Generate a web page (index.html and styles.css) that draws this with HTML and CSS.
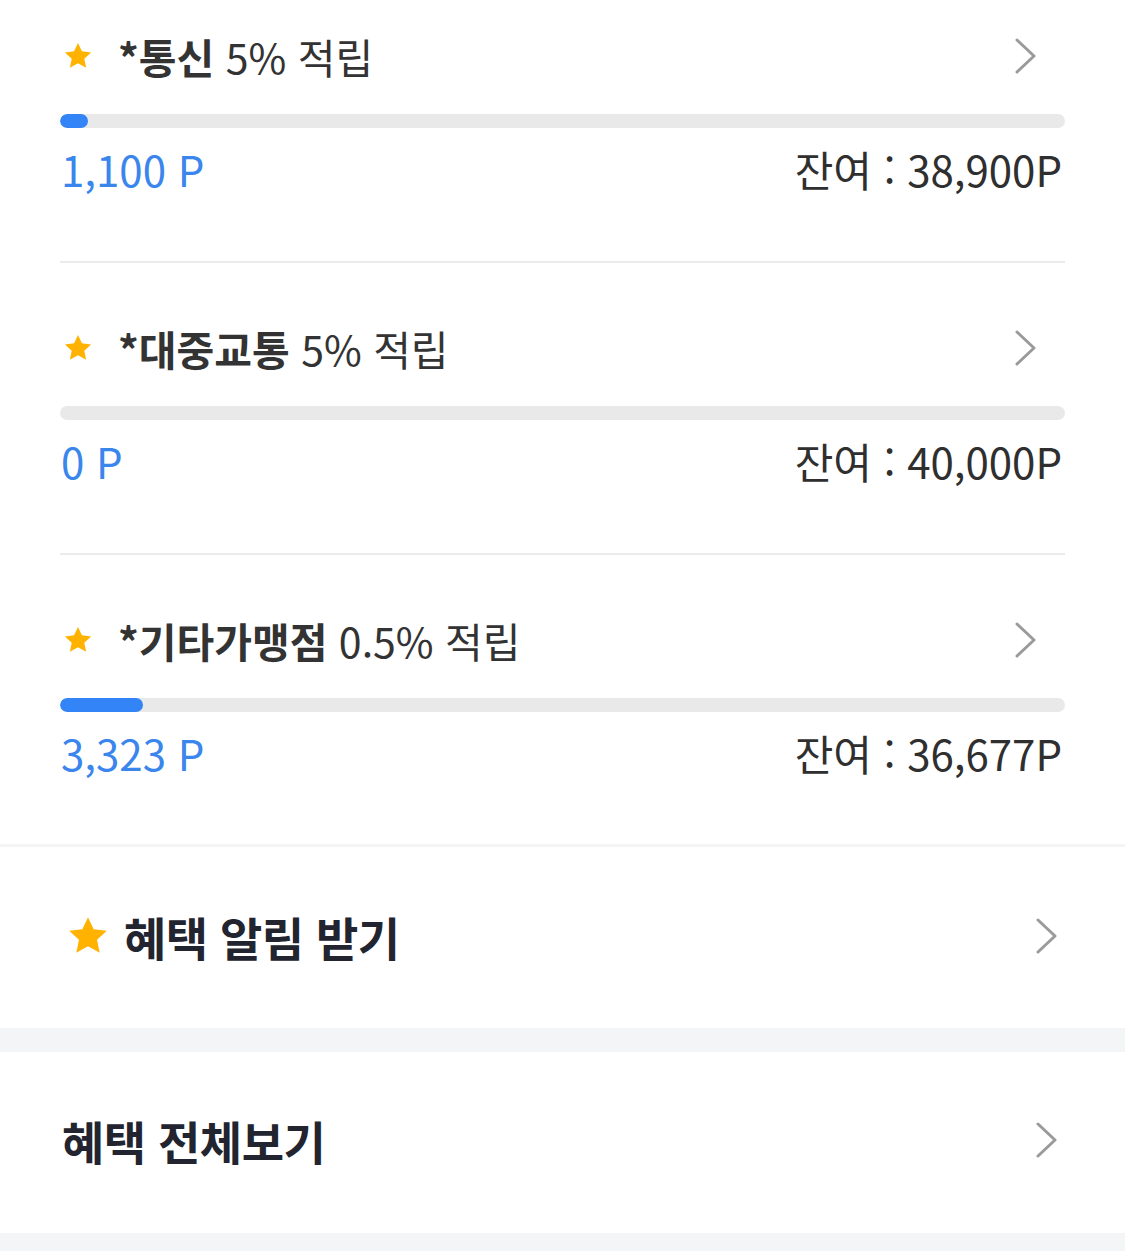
FILE: index.html
```html
<!DOCTYPE html>
<html lang="ko">
<head>
<meta charset="utf-8">
<link rel="stylesheet" href="styles.css">
</head>
<body>
<div class="page">
  <section class="list">
    <div class="item first">
      <div class="title-row">
        <svg class="star" viewBox="0 0 24 24"><path d="M12 2.2l2.95 6.3 6.85.8-5.08 4.68 1.37 6.77L12 17.35l-6.09 3.4 1.37-6.77L2.2 9.3l6.85-.8z"/></svg>
        <span class="title"><b>*통신</b> 5% 적립</span>
        <svg class="chev" viewBox="0 0 22 36"><path d="M2 2l17 16L2 34"/></svg>
      </div>
      <div class="bar"><div class="fill" style="width:28px"></div></div>
      <div class="points-row">
        <span class="points">1,100 P</span>
        <span class="remain">잔여 : 38,900P</span>
      </div>
    </div>
    <div class="item">
      <div class="title-row">
        <svg class="star" viewBox="0 0 24 24"><path d="M12 2.2l2.95 6.3 6.85.8-5.08 4.68 1.37 6.77L12 17.35l-6.09 3.4 1.37-6.77L2.2 9.3l6.85-.8z"/></svg>
        <span class="title"><b>*대중교통</b> 5% 적립</span>
        <svg class="chev" viewBox="0 0 22 36"><path d="M2 2l17 16L2 34"/></svg>
      </div>
      <div class="bar"></div>
      <div class="points-row">
        <span class="points">0 P</span>
        <span class="remain">잔여 : 40,000P</span>
      </div>
    </div>
    <div class="item last">
      <div class="title-row">
        <svg class="star" viewBox="0 0 24 24"><path d="M12 2.2l2.95 6.3 6.85.8-5.08 4.68 1.37 6.77L12 17.35l-6.09 3.4 1.37-6.77L2.2 9.3l6.85-.8z"/></svg>
        <span class="title"><b>*기타가맹점</b> 0.5% 적립</span>
        <svg class="chev" viewBox="0 0 22 36"><path d="M2 2l17 16L2 34"/></svg>
      </div>
      <div class="bar"><div class="fill" style="width:83px"></div></div>
      <div class="points-row">
        <span class="points">3,323 P</span>
        <span class="remain">잔여 : 36,677P</span>
      </div>
    </div>
  </section>
  <div class="menu-row alarm">
    <svg class="star big" viewBox="0 0 24 24"><path d="M12 2.2l2.95 6.3 6.85.8-5.08 4.68 1.37 6.77L12 17.35l-6.09 3.4 1.37-6.77L2.2 9.3l6.85-.8z"/></svg>
    <span class="menu-title">혜택 알림 받기</span>
    <svg class="chev" viewBox="0 0 22 36"><path d="M2 2l17 16L2 34"/></svg>
  </div>
  <div class="gap"></div>
  <div class="menu-row all">
    <span class="menu-title">혜택 전체보기</span>
    <svg class="chev" viewBox="0 0 22 36"><path d="M2 2l17 16L2 34"/></svg>
  </div>
  <div class="gap bottom"></div>
</div>
</body>
</html>
```
FILE: styles.css
```css
html, body {
  margin: 0;
  padding: 0;
  background: #ffffff;
}
body {
  font-family: "Noto Sans CJK KR", "Noto Sans", sans-serif;
  color: #333333;
}
.page {
  width: 1125px;
}
.list {
  padding: 0 60px;
}
.item {
  padding: 55px 0 64px;
  border-bottom: 2px solid #ebebeb;
}
.item.first {
  padding-top: 26px;
}
.item.last {
  border-bottom: none;
  padding-bottom: 63px;
}
.title-row {
  display: flex;
  align-items: center;
  height: 60px;
}
.star {
  width: 32px;
  height: 32px;
  fill: #ffb300;
  margin-left: 2px;
  flex: none;
}
.title {
  margin-left: 24px;
  font-size: 41px;
  line-height: 60px;
  color: #333333;
  flex: 1;
}
.title b {
  font-weight: 700;
}
.chev {
  width: 22px;
  height: 36px;
  fill: none;
  stroke: #9a9a9a;
  stroke-width: 3;
  stroke-linecap: round;
  stroke-linejoin: round;
  margin-right: 28px;
  flex: none;
}
.bar {
  margin-top: 28px;
  height: 14px;
  border-radius: 7px;
  background: #e9e9e9;
  overflow: hidden;
}
.fill {
  height: 100%;
  border-radius: 7px;
  background: #3384f6;
}
.points-row {
  margin-top: 13px;
  display: flex;
  justify-content: space-between;
  align-items: center;
  height: 56px;
  font-size: 42px;
  font-weight: 400;
  line-height: 56px;
}
.points {
  color: #3a86ec;
  margin-left: 1px;
}
.remain {
  color: #2f2f2f;
  margin-right: 3px;
}
.menu-row {
  display: flex;
  align-items: center;
  height: 181px;
  padding: 0 67px 0 62px;
  box-sizing: border-box;
}
.menu-row.alarm {
  border-top: 3px solid #f4f4f4;
  height: 184px;
  padding-left: 65px;
  padding-bottom: 4px;
}
.menu-row.all {
  padding-bottom: 6px;
}
.star.big {
  width: 46px;
  height: 46px;
  margin-left: 0;
}
.alarm .menu-title {
  margin-left: 13px;
}
.menu-title {
  flex: 1;
  font-size: 46px;
  font-weight: 700;
  color: #22252f;
  letter-spacing: -0.5px;
  line-height: 60px;
}
.menu-row .chev {
  margin-right: 0;
}
.gap {
  height: 24px;
  background: #f4f5f7;
}
.gap.bottom {
  height: 18px;
}
```
